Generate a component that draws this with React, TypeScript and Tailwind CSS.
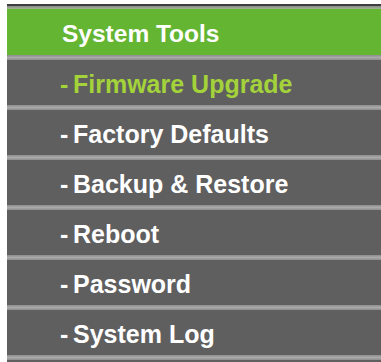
const items = [
  { label: "Firmware Upgrade", active: true },
  { label: "Factory Defaults" },
  { label: "Backup & Restore" },
  { label: "Reboot" },
  { label: "Password" },
  { label: "System Log" },
];

export default function App() {
  return (
    <div
      className="w-[381px] h-[362px] overflow-hidden bg-white pt-[4px] pl-[7px]"
      style={{ fontFamily: '"Liberation Sans", Arial, sans-serif' }}
    >
      <div className="w-full">
        <div className="border-t-2 border-[#3e3e3e]">
          <div className="h-[3px] bg-gradient-to-b from-[#8a8a8a] to-[#9fb88f]" />
          <div className="h-[46px] bg-[#64b532] flex items-center pl-[55px] pt-[4px]">
            <span className="text-[24.5px] leading-none font-bold text-white">
              System Tools
            </span>
          </div>
        </div>
        {items.map((it) => (
          <div key={it.label}>
            <div className="h-[5px] bg-gradient-to-b from-[#8d8d8d] via-[#a9a9a9] to-[#8d8d8d]" />
            <div
              className={
                "h-[45px] bg-[#5f5f5f] flex items-center pl-[53px] pt-[3px] text-[25px] leading-none font-bold " +
                (it.active ? "text-[#a3d23a]" : "text-white")
              }
            >
              <span className="w-[13px] shrink-0">-</span>
              <span>{it.label}</span>
            </div>
          </div>
        ))}
        <div className="h-[5px] bg-gradient-to-b from-[#8d8d8d] via-[#a9a9a9] to-[#8d8d8d]" />
        <div className="h-[45px] bg-[#5f5f5f]" />
      </div>
    </div>
  );
}
